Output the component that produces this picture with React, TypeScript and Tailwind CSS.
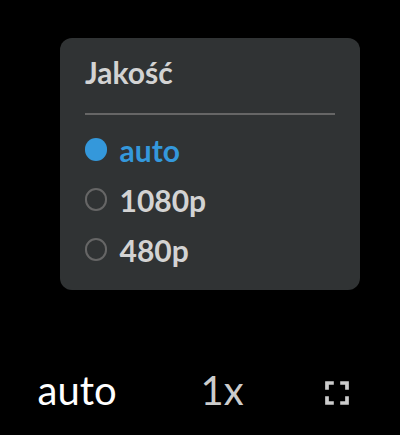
import { useState } from 'react'

const QUALITIES = ['auto', '1080p', '480p']

function App() {
  const [quality, setQuality] = useState('auto')

  return (
    <div className="flex h-[435px] w-[400px] flex-col overflow-hidden bg-black pt-[38px] font-['Lato',sans-serif] text-[#cccccc]">
      {/* Quality menu */}
      <section className="ml-[60px] h-[252px] w-[300px] shrink-0 rounded-xl bg-[#303334] px-[25px] text-[30px] font-bold">
        <h2 className="h-[77px] border-b-2 border-[#666666] pt-[16px] leading-9 text-[#d3d3d3]">Jakość</h2>
        <ul className="pt-[10px]">
          {QUALITIES.map((item) => (
            <li key={item}>
              <button
                onClick={() => setQuality(item)}
                className={`flex h-[50px] w-full items-start pt-[13px] ${
                  quality === item ? 'text-[#3498db]' : 'text-[#d3d3d3]'
                }`}
              >
                <span
                  className={`h-[23px] w-[22px] shrink-0 rounded-full ${
                    quality === item ? 'bg-[#3498db]' : 'border-2 border-[#666666]'
                  }`}
                />
                <span className="-mt-[6px] ml-[12.5px] leading-9">{item}</span>
              </button>
            </li>
          ))}
        </ul>
      </section>

      {/* Player controls */}
      <div className="mt-[76px] flex h-12 items-start text-[40px] leading-[48px]">
        <button className="ml-[37.5px] w-[163px] text-left text-white">{quality}</button>
        <button className="w-[124px] text-left">1x</button>
        <button aria-label="Pełny ekran" className="mt-[15px] ml-[0.5px]">
          <svg width="24" height="24" viewBox="0 0 24 24" fill="none" stroke="currentColor" strokeWidth="3.7">
            <path d="M2 8.8V2H8.8M15.2 2H22V8.8M22 15.2V22H15.2M8.8 22H2V15.2" />
          </svg>
        </button>
      </div>
    </div>
  )
}

export default App
